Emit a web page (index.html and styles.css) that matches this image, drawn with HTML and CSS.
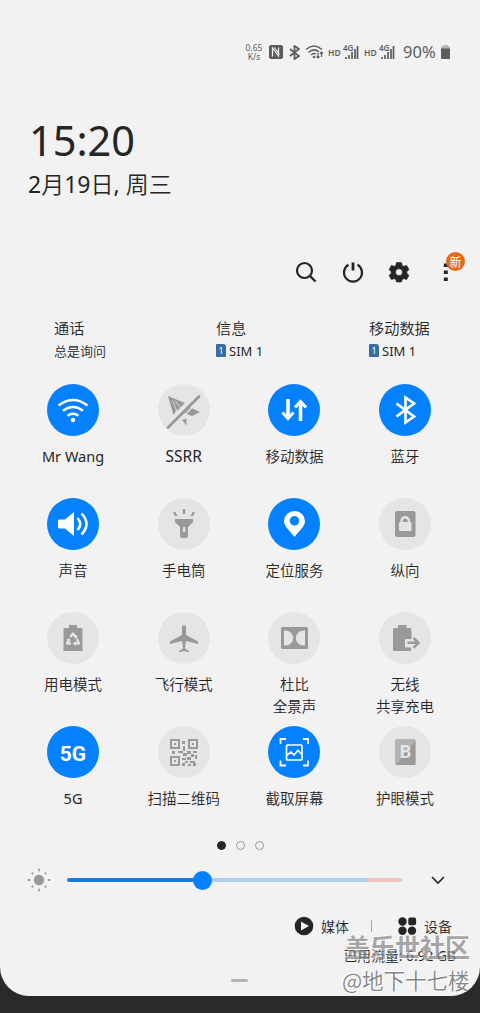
FILE: index.html
```
<!DOCTYPE html>
<html lang="zh-CN">
<head>
<meta charset="utf-8">
<title>快捷设置</title>
<link rel="stylesheet" href="styles.css">
</head>
<body>
<main class="panel">
  <header class="status">
    <div class="speed"><span>0.65</span><span>K/s</span></div>
    <svg class="nfc" width="14" height="14" viewBox="0 0 14 14"><rect width="14" height="14" rx="2" fill="#5c5c5c"/><path d="M3.500 11.500V3l6 8V2.500M5.200 2.500l5.200 7" fill="none" stroke="#f2f2f2" stroke-width="1.200"/></svg>
    <svg class="bt" width="11" height="15" viewBox="0 0 11 15"><path d="M1 4l9 7-4.500 3V1L10 4 1 11" fill="none" stroke="#5c5c5c" stroke-width="1.800"/></svg>
    <svg class="wifi" width="19" height="16" viewBox="0 0 19 16"><path d="M1 5.500Q9 -1.500 17 5.500M3.500 8.500Q9 3.500 14 8M6 11Q9 8.500 11 10" fill="none" stroke="#5c5c5c" stroke-width="1.500"/><circle cx="9" cy="13" r="1.300" fill="#5c5c5c"/><path d="M13 9v5m-1.500-1.500L13 14l1.500-1.500M16.500 13V8M15 9.500L16.500 8 18 9.500" fill="none" stroke="#5c5c5c" stroke-width="1.200"/></svg>
    <span class="hd">HD</span>
    <span class="signal"><svg width="17" height="15" viewBox="0 0 17 15"><path d="M4 12v2M7 10v4M10 7v7M13 4v10M15.500 1v13" stroke="#5c5c5c" stroke-width="1.700"/></svg><b>4G</b></span>
    <span class="hd second">HD</span>
    <span class="signal"><svg width="17" height="15" viewBox="0 0 17 15"><path d="M4 12v2M7 10v4M10 7v7M13 4v10M15.500 1v13" stroke="#5c5c5c" stroke-width="1.700"/></svg><b>4G</b></span>
    <span class="percent">90%</span>
    <svg class="battery" width="9" height="14" viewBox="0 0 9 14"><path d="M2 0h5v1.500h2V4H0V1.500h2z" fill="#b5b5b5"/><path d="M0 3.500h9V13a1 1 0 0 1-1 1H1a1 1 0 0 1-1-1z" fill="#5c5c5c"/></svg>
  </header>

  <section class="clock">
    <div class="time">15:20</div>
    <div class="date"><span class="latin">2</span>月<span class="latin">19</span>日<span class="latin">, </span>周三</div>
  </section>

  <nav class="tools">
    <svg width="24" height="24" viewBox="0 0 24 24"><circle cx="10.500" cy="10.500" r="7.500" fill="none" stroke="#252525" stroke-width="2.200"/><path d="M16 16l5.500 5.500" stroke="#252525" stroke-width="2.400"/></svg>
    <svg width="24" height="24" viewBox="0 0 24 24"><path d="M7.500 4.800a9 9 0 1 0 9 0" fill="none" stroke="#252525" stroke-width="2.200"/><path d="M12 2.500v8" stroke="#252525" stroke-width="2.800"/></svg>
    <svg width="24" height="24" viewBox="0 0 24 24"><path fill="#252525" stroke="#252525" stroke-width=".6" stroke-linejoin="round" fill-rule="evenodd" d="M9.500 2.500h5l.7 2.900 1.500.9 2.900-.9 2.400 4.200-2.100 2v1.800l2.100 2-2.400 4.200-2.900-.9-1.500.9-.7 2.400h-5l-.7-2.400-1.500-.9-2.900.9L2 15.400l2.100-2v-1.800L2 9.600l2.400-4.200 2.900.9 1.500-.9zM12 8.800a3.400 3.400 0 1 0 0 6.800 3.400 3.400 0 0 0 0-6.800z"/></svg>
    <span class="more"><svg width="24" height="24" viewBox="0 0 24 24"><path d="M9.800 3.500h4v3.500h-4zM9.800 10.400h4v3.500h-4zM9.800 17.400h4v3.500h-4z" fill="#252525"/></svg><span class="badge">新</span></span>
  </nav>

  <section class="sims">
    <div class="sim"><div>通话</div><small>总是询问</small></div>
    <div class="sim"><div>信息</div><small class="latin"><i class="card">1</i>SIM 1</small></div>
    <div class="sim"><div>移动数据</div><small class="latin"><i class="card">1</i>SIM 1</small></div>
  </section>

  <section class="tiles">
    <div class="tile on"><svg viewBox="0 0 52 52"><path d="M11.500 21.500Q26 10.500 40.500 21.500M16 26.700q10-7.500 20 0M20.500 31.700q5.500-4 11 0" fill="none" stroke="#fff" stroke-width="2.400"/><circle cx="26" cy="36" r="2.200" fill="#fff"/></svg><p class="latin">Mr Wang</p></div>
    <div class="tile"><svg viewBox="0 0 52 52"><path d="M10 12l17 7-7 7-2.500 1-1 3.500-1.500-1zM31 23l11 5-4 2-4 2-8-3zM24 36l4.500-1.500v7z" fill="#999"/><path d="M14.500 16.500l4.500 11M17.500 17l5 7" stroke="#e5e5e5" stroke-width=".8"/><path d="M12 45.500l31-31" stroke="#e5e5e5" stroke-width="1.600"/><path d="M10 43.500l31-31" stroke="#999" stroke-width="2.800" stroke-linecap="round"/></svg><p class="latin wide">SSRR</p></div>
    <div class="tile on"><svg viewBox="0 0 52 52"><path d="M20 15v19M32.500 18v19" stroke="#fff" stroke-width="3.600"/><path d="M14.500 28.500l5.500 6 5.500-6M27 23.500l5.500-6 5.500 6" fill="none" stroke="#fff" stroke-width="3.200"/></svg><p>移动数据</p></div>
    <div class="tile on"><svg viewBox="0 0 52 52"><path d="M17.500 19.500l17.500 13-8.500 6V13.500L35 19.500l-17.500 13" fill="none" stroke="#fff" stroke-width="2.700"/></svg><p>蓝牙</p></div>

    <div class="tile on"><svg viewBox="0 0 52 52"><path d="M12 21.500h6L27 14v24l-9-7.500h-6q-1 0-1-1v-7q0-1 1-1z" fill="#fff"/><path d="M30.500 20q5.500 6 0 12M34.500 15.500q10 10.500 0 21" fill="none" stroke="#fff" stroke-width="2.500"/></svg><p>声音</p></div>
    <div class="tile"><svg viewBox="0 0 52 52"><path fill-rule="evenodd" d="M17 21h18v3l-5 5v9q0 2-2 2h-4q-2 0-2-2v-9l-5-5zM25 29v5h2.200v-5z" fill="#999"/><path d="M26 11v5M16 14l2.500 4M36 14l-2.500 4" stroke="#999" stroke-width="2.300"/></svg><p>手电筒</p></div>
    <div class="tile on"><svg viewBox="0 0 52 52"><path fill-rule="evenodd" d="M26.500 39C22 33 16 28.500 16 23a10.500 10 0 0 1 21 0c0 5.500-6 10-10.500 16zM26.500 18a4.800 4.800 0 1 0 0 9.600 4.800 4.800 0 0 0 0-9.600z" fill="#fff"/></svg><p>定位服务</p></div>
    <div class="tile"><svg viewBox="0 0 52 52"><rect x="16" y="13" width="20.500" height="26" rx="1.800" fill="#999"/><rect x="20" y="24" width="12.500" height="9" rx="1" fill="#e5e5e5"/><path d="M22.500 25v-2a3.700 3.700 0 0 1 7.400 0v2" fill="none" stroke="#e5e5e5" stroke-width="2.400"/></svg><p>纵向</p></div>

    <div class="tile"><svg viewBox="0 0 52 52"><path d="M22 13h8v3h4q1.500 0 1.500 1.500V39h-19V17.500Q16.500 16 18 16h4z" fill="#999"/><path d="M23.200 25l2.800-3.500 2.800 3.500M30 27l2 4.500h-4M24 31.500h-4l2-4.500" fill="none" stroke="#e5e5e5" stroke-width="2.300" stroke-linejoin="round"/><path d="M27 26.500l3.500-.5-.5-3.500zM28.500 29v5l-2.700-2.500zM19.500 27.800l3.500-1.300.5 3.500z" fill="#e5e5e5"/></svg><p>用电模式</p></div>
    <div class="tile"><svg viewBox="0 0 52 52"><path d="M26 13q2 0 2 2.500V23l12 6.500V32l-12-3-1 7.500 4 2.500v1.500L26 39l-5 1.500V39l4-2.500-1-7.500-12 3v-2.500L24 23v-7.500Q24 13 26 13z" fill="#999"/></svg><p>飞行模式</p></div>
    <div class="tile"><svg viewBox="0 0 52 52"><rect x="13" y="15" width="27" height="22" rx="1.500" fill="#999"/><path d="M16 18.500h1.500a7.700 7.500 0 0 1 0 15H16zM37 18.500h-1.500a7.700 7.500 0 0 0 0 15H37z" fill="#e5e5e5"/></svg><p>杜比<br>全景声</p></div>
    <div class="tile"><svg viewBox="0 0 52 52"><path d="M19 13h8.500v3H31q1.500 0 1.500 1.500V27H26v8.500h6V39H15.500q-1.500 0-1.500-1.500v-20q0-1.500 1.500-1.500H19z" fill="#999"/><path d="M28.500 30.800H39M34.500 25.800l5 5-5 5" fill="none" stroke="#999" stroke-width="2.400"/></svg><p>无线<br>共享充电</p></div>

    <div class="tile on"><svg viewBox="0 0 52 52"><text class="five" x="26" y="34.500">5G</text></svg><p class="latin">5G</p></div>
    <div class="tile"><svg viewBox="0 0 52 52"><g fill="none" stroke="#999" stroke-width="2"><path d="M13 14h8v8h-8zM31 14h8v8h-8zM13 31h8v8h-8z"/></g><path d="M16 17h2v2h-2zM34 17h2v2h-2zM16 34h2v2h-2zM24 15h3v3h-3zM25 20h2v5h-2zM14 25h3v3h-3zM20 25h5v2h-5zM25 27h4v3h-4zM29 25h4v3h-4zM35 25h4v2h-4zM33 28h3v3h-3zM37 29h2v4h-2zM24 32h4v2h-4zM29 31h4v3h-4zM27 35h3v2h-3zM32 35h5v2h-5zM24 37h3v3h-3zM30 38h3v2h-3zM35 37h3v3h-3z" fill="#999"/></svg><p>扫描二维码</p></div>
    <div class="tile on"><svg viewBox="0 0 52 52"><path d="M12.500 18v-5H18M35 13h5v5M40 34.500v5h-5M18 39.500h-5.500v-5" fill="none" stroke="#fff" stroke-width="1.800"/><rect x="18.500" y="19" width="15.500" height="15" rx="1" fill="none" stroke="#fff" stroke-width="1.700"/><path d="M19 29l4-3 3 3 4-4.500 4 4" fill="none" stroke="#fff" stroke-width="1.700"/></svg><p>截取屏幕</p></div>
    <div class="tile"><svg viewBox="0 0 52 52"><rect x="16" y="13" width="20.500" height="26" rx="1.500" fill="#b3b3b3"/><path d="M36.500 14v23.500q0 1.500-1.500 1.500H17z" fill="#999"/><text class="letter" x="26.500" y="31.500">B</text></svg><p>护眼模式</p></div>
  </section>

  <div class="pages"><i class="current"></i><i></i><i></i></div>

  <section class="brightness">
    <svg class="sun" width="24" height="24" viewBox="0 0 24 24"><circle cx="12" cy="12" r="5.200" fill="#999"/><path d="M12 .8v2.400M12 20.800v2.400M.8 12h2.400M20.800 12h2.400M4.700 4.700l1.400 1.400M17.900 17.900l1.400 1.400M4.700 19.300l1.400-1.400M17.900 6.100l1.400-1.400" stroke="#999" stroke-width="1.800"/></svg>
    <div class="track"><span class="fill"></span><span class="rest"></span><span class="high"></span><span class="knob"></span></div>
    <svg class="chev" width="14" height="9" viewBox="0 0 14 9"><path d="M1 1l6 6 6-6" fill="none" stroke="#252525" stroke-width="1.600"/></svg>
  </section>

  <footer class="links">
    <svg width="20" height="20" viewBox="0 0 20 20"><circle cx="10" cy="10" r="9.300" fill="#252525"/><path d="M7 5.500l8 4.500-8 4.500z" fill="#f2f2f2"/></svg>
    <span class="media">媒体</span>
    <i class="divider"></i>
    <svg width="20" height="20" viewBox="0 0 20 20"><circle cx="5.500" cy="5.500" r="4.200" fill="#252525"/><rect x="11.300" y="1.500" width="7.800" height="7.800" rx="2" fill="#252525"/><circle cx="5.500" cy="14.700" r="4.200" fill="#252525"/><circle cx="15" cy="14.700" r="4.200" fill="#252525"/></svg>
    <span class="device">设备</span>
  </footer>
  <div class="usage">已用流量<span class="latin">: 6.92 GB</span></div>
  <div class="handle"></div>
  <div class="watermark"><b>盖乐世社区</b><span>@地下十七楼</span></div>
</main>
</body>
</html>
```
FILE: styles.css
```
* { box-sizing: border-box; }
body {
  margin: 0;
  height: 1013px;
  overflow: hidden;
  background: #2a2a2a;
  color: #252525;
  font-family: "Noto Sans", "Noto Sans CJK SC", sans-serif;
}
svg { display: block; flex: none; }
i { font-style: normal; }
.panel {
  position: relative;
  display: flex;
  flex-direction: column;
  height: 996px;
  padding-top: 40px;
  background: #f2f2f2;
  border-radius: 0 0 29px 29px;
  overflow: hidden;
}

.status {
  display: flex;
  align-items: center;
  height: 24px;
  padding-left: 245px;
  color: #5c5c5c;
}
.speed {
  display: flex;
  flex-direction: column;
  align-items: center;
  width: 18px;
  font-size: 8.5px;
  line-height: 9px;
}
.nfc { margin-left: 6px; }
.bt { margin-left: 6px; }
.wifi { margin-left: 5px; }
.hd {
  width: 13px;
  margin-left: 4px;
  font-size: 8.5px;
  font-weight: 600;
}
.hd.second { margin-left: 5px; }
.signal { position: relative; margin-left: 1px; }
.signal b {
  position: absolute;
  left: 1px;
  top: -2px;
  font-size: 8px;
  line-height: 9px;
  font-weight: 600;
  background: #f2f2f2;
}
.percent { width: 35px; margin-left: 8px; font-size: 16.500px; line-height: 24px; }
.battery { margin-left: 3px; }

.clock { height: 181px; padding: 49px 0 0 28px; }
.time { height: 54px; padding-left: 1px; font-size: 41.500px; line-height: 54px; }
.date { height: 32px; margin-top: 1px; font-size: 23px; line-height: 32px; font-weight: 350; }

.tools {
  display: flex;
  justify-content: space-between;
  margin-top: 15px;
  padding: 0 22px 0 294px;
}
.more { position: relative; }
.badge {
  position: absolute;
  left: 12px;
  top: -8px;
  width: 19px;
  height: 19px;
  border-radius: 50%;
  background: #e36b16;
  color: #fff;
  font-family: "Noto Sans CJK SC", sans-serif;
  font-size: 12px;
  line-height: 19px;
  text-align: center;
}

.sims {
  display: grid;
  grid-template-columns: 162px 153px 100px;
  height: 44px;
  margin-top: 33px;
  padding-left: 54px;
}
.sim { font-size: 15.200px; line-height: 22px; white-space: nowrap; font-weight: 350; }
.sim small {
  display: flex;
  align-items: center;
  height: 23px;
  font-size: 13px;
}
.card {
  width: 10px;
  height: 13px;
  margin-right: 3px;
  border-radius: 1px 3px 1px 1px;
  background: #366da5;
  color: #fff;
  font-size: 9px;
  line-height: 13px;
  text-align: center;
}

.tiles {
  display: grid;
  grid-template-columns: repeat(4, 110.7px);
  grid-auto-rows: 114px;
  margin-top: 23px;
  padding-left: 17.700px;
}
.tile { display: flex; flex-direction: column; align-items: center; }
.tile svg {
  width: 52px;
  height: 52px;
  border-radius: 50%;
  background: #e5e5e5;
}
.tile.on svg { background: #0381fe; }
.tile p {
  margin: 9px 0 0;
  font-size: 14.5px;
  font-weight: 350;
  line-height: 22px;
  text-align: center;
  white-space: nowrap;
}
.latin, .tile .latin { font-weight: 400; }
.tile .wide { font-size: 15.500px; }
.five { font: 700 21px Roboto, sans-serif; fill: #fff; text-anchor: middle; }
.letter { font: 700 18px Roboto, sans-serif; fill: #e5e5e5; text-anchor: middle; }

.pages { display: flex; justify-content: center; gap: 10px; height: 9px; margin-top: 1px; }
.pages i { width: 9px; height: 9px; border: 1.5px solid #999; border-radius: 50%; }
.pages .current { background: #252525; border-color: #252525; }

.brightness {
  display: flex;
  align-items: center;
  height: 24px;
  margin-top: 18px;
  padding-left: 27px;
}
.track {
  position: relative;
  display: flex;
  width: 335px;
  height: 4px;
  margin-left: 16px;
}
.fill { width: 135px; background: #1d7ddf; border-radius: 2px 0 0 2px; }
.rest { width: 165px; background: #aecdec; }
.high { width: 35px; background: #efc2be; border-radius: 0 2px 2px 0; }
.knob {
  position: absolute;
  left: 125.500px;
  top: -7.500px;
  width: 19px;
  height: 19px;
  border-radius: 50%;
  background: #0381fe;
}
.chev { margin-left: 29px; }

.links {
  display: flex;
  align-items: center;
  height: 24px;
  margin-top: 22px;
  padding-left: 294px;
  font-size: 14px;
  font-weight: 350;
}
.media { width: 28px; margin-left: 7px; }
.divider { width: 1px; height: 12px; margin: 0 25px 0 22px; background: #aaa; }
.device { margin-left: 7px; }
.usage {
  height: 20px;
  margin-top: 8px;
  padding-right: 24px;
  font-size: 13.800px;
  font-weight: 350;
  line-height: 20px;
  text-align: right;
  white-space: nowrap;
}
.handle {
  width: 17px;
  height: 3px;
  margin: 13px 0 0 231px;
  border-radius: 2px;
  background: #b3b3b3;
}
.watermark {
  position: absolute;
  left: 342px;
  top: 930px;
  display: flex;
  flex-direction: column;
  color: #858585;
  font-family: "Noto Sans CJK SC", sans-serif;
  white-space: nowrap;
  text-shadow: -1px -1px 0 #fff, 1px 1px 1px #fff;
}
.watermark b {
  padding-left: 3px;
  font-size: 25px;
  line-height: 33px;
  font-weight: 700;
  opacity: .7;
}
.watermark span { font-size: 21.500px; line-height: 34px; font-weight: 350; }
```
